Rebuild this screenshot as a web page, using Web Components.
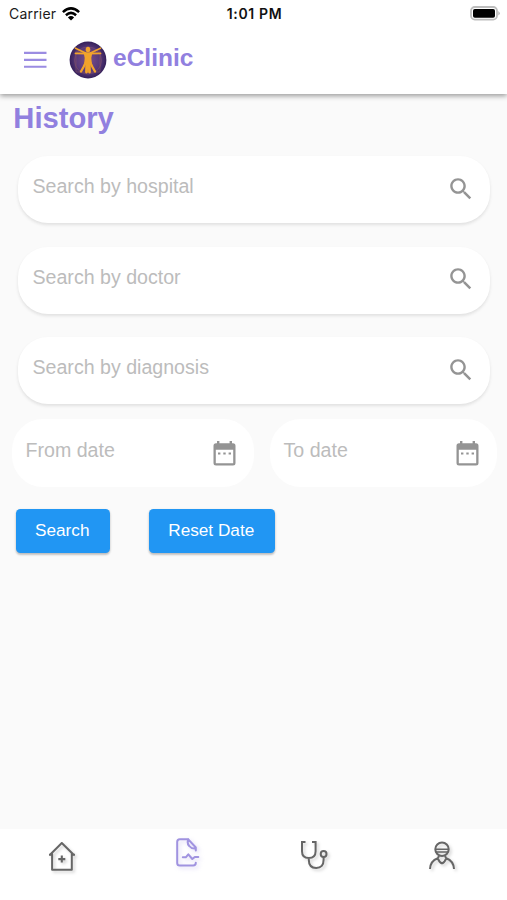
<!DOCTYPE html>
<html lang="en">
<head>
<meta charset="utf-8">
<title>eClinic</title>
<style>
html,body{margin:0;height:100%;background:#fafafa}
body{font-family:"Liberation Sans",Arial,sans-serif;overflow:hidden}
</style>
</head>
<body>
<clinic-app></clinic-app>
<script>
function define(name, html) {
  customElements.define(name, class extends HTMLElement {
    constructor() {
      super();
      const t = document.createElement('template');
      t.innerHTML = html;
      this.attachShadow({mode: 'open'}).appendChild(t.content.cloneNode(true));
    }
  });
}

define('status-bar', `<style>
:host{display:grid;grid-template-columns:1fr auto 1fr;align-items:center;height:27px;padding:0 7px 0 9px;box-sizing:border-box;font-family:Inter,"Liberation Sans",sans-serif;font-size:14px;color:#1b1b1b}
.l{display:flex;align-items:center;gap:6px;letter-spacing:.2px}
.t{font-weight:600;font-size:14px;letter-spacing:.62px;color:#111}
.r{display:flex;justify-content:flex-end}
svg{display:block}
</style>
<div class="l"><span>Carrier</span><svg width="18" height="14" viewBox="0 0 18 14" fill="none" stroke="#000" stroke-width="2.5"><path d="M.9 5.1Q9-2.3 17.1 5.1M3.9 8.2Q9 3.6 14.1 8.2"/><path d="M9 13.4 5.9 10.4Q9 7.8 12.1 10.4Z" fill="#000" stroke="none"/></svg></div>
<div class="t">1:01 PM</div>
<div class="r"><svg width="30" height="15" viewBox="0 0 30 15"><rect x="1" y="1" width="26" height="12.6" rx="3.8" fill="#fff" stroke="#bdbdbd" stroke-width="1.8"/><rect x="3" y="2.900" width="22" height="8.800" rx="1.8" fill="#000"/><path d="M28.3 5q3 2.300 0 4.600z" fill="#b5b5b5"/></svg></div>`);

define('clinic-logo', `<style>:host{display:block;width:38px;height:38px}svg{display:block}</style>
<svg width="38" height="38" viewBox="0 0 38 38"><defs><radialGradient id="g"><stop offset="0" stop-color="#79508a"/><stop offset=".65" stop-color="#58397a"/><stop offset="1" stop-color="#35205a"/></radialGradient></defs>
<circle cx="19" cy="19" r="18.4" fill="url(#g)"/><circle cx="19" cy="19.5" r="13.5" fill="none" stroke="#8c5966" stroke-width=".5"/><path d="M7 10h24v21H7z" fill="none" stroke="#8c5966" stroke-width=".5"/>
<g fill="none" stroke="#f2a32b" stroke-linecap="round"><path d="M17 12.2 6.5 7.2M21 12.2 31.5 7.2" stroke-width="1.6"/><path d="M6.5 12.4 17 12.5M31.5 12.4 21 12.5" stroke-width="1.8"/><path d="M17.8 21 17.5 31M20.2 21 20.5 31" stroke-width="2.800"/><path d="M17 21 14.5 26 12 30.5M21 21 23.5 26 26 30.5" stroke-width="2.300"/></g>
<path d="M14.600 11.4h8.800L22.3 17l.5 5.5h-7.600l.5-5.5z" fill="#f2a32b"/><ellipse cx="19" cy="8.6" rx="2.300" ry="2.800" fill="#f2a32b"/></svg>`);

define('app-header', `<style>
:host{display:flex;align-items:flex-start;height:67px;padding:14px 24px 0;box-sizing:border-box}
.m{display:block;margin-top:10px}
clinic-logo{margin-left:21.500px}
h1{margin:3px 0 0 6.500px;font-size:24.5px;line-height:28px;color:#9180df;font-weight:700}
</style>
<svg class="m" width="23" height="17" viewBox="0 0 23 17" stroke="#9b8ce2" stroke-width="2.100"><path d="M0 1.9h22.5M0 8.9h22.5M0 15.8h22.5"/></svg>
<clinic-logo></clinic-logo><h1>eClinic</h1>`);

define('search-field', `<style>
:host{display:flex;justify-content:space-between;align-items:flex-start;height:67px;box-sizing:border-box;padding:18px 17.500px 0 14.5px;border-radius:30px;background:#fff;box-shadow:0 2px 3px rgba(0,0,0,.075),0 2px 5px rgba(0,0,0,.03)}
span{font-size:19.6px;line-height:24px;color:#bcbcbc}
svg{display:block;margin-top:2.600px}
</style><span><slot></slot></span>
<svg width="24" height="24" viewBox="2 2 20 20" fill="#949494"><path d="M15.5 14h-.79l-.28-.27C15.41 12.59 16 11.11 16 9.5 16 5.91 13.09 3 9.5 3S3 5.91 3 9.5 5.91 16 9.5 16c1.61 0 3.09-.59 4.23-1.57l.27.28v.79l5 4.99L20.49 19l-4.99-5zm-6 0C7.01 14 5 11.99 5 9.5S7.01 5 9.5 5 14 7.01 14 9.5 11.99 14 9.5 14z"/></svg>`);

define('date-field', `<style>
:host{display:flex;justify-content:space-between;align-items:flex-start;height:68px;box-sizing:border-box;padding:19px 18px 0 13.5px;border-radius:31px;background:#fff}
span{font-size:19.6px;line-height:24px;color:#bcbcbc}
svg{display:block;margin-top:2.500px}
</style><span><slot></slot></span>
<svg width="23" height="25" viewBox="0 0 23 25"><path fill="#949494" fill-rule="evenodd" d="M3 2.2h1V0h2.4v2.2h10.2V0H19v2.2h1q2.5 0 2.5 2.5v17.400q0 2.5-2.5 2.5H3Q.5 24.600.5 22.100V4.700Q.5 2.200 3 2.200ZM2.800 8.700v13.600h17.400V8.700Z"/><path fill="#949494" d="M5 11.400h2.400v2.200H5zM10.300 11.400h2.400v2.200h-2.400zM15.600 11.400H18v2.200h-2.400z"/></svg>`);

define('action-button', `<style>
:host{display:flex;align-items:center;justify-content:center;height:44px;box-sizing:border-box;padding:0 1px 1px 0;border-radius:4.5px;background:#2196f3;color:#fff;font-size:17.2px;box-shadow:0 2px 2px rgba(0,0,0,.16),0 1px 3px rgba(0,0,0,.14)}
</style><span><slot></slot></span>`);

define('bottom-nav', `<style>
:host{display:grid;grid-template-columns:repeat(4,1fr);height:71px;background:#fff;justify-items:center}
svg{display:block;fill:none;stroke:#666;stroke-width:2;filter:drop-shadow(2px 2px 1.5px rgba(0,0,0,.17))}
.h{margin:12px 0 0 -3px}.d{margin:8px 0 0 -5px;stroke:#a093e0;filter:drop-shadow(2px 2px 2px rgba(145,128,223,.3))}.s{margin:10px 0 0 -6px}.p{margin:11px 0 0 -3px}
</style>
<svg class="h" width="30" height="32" viewBox="0 0 30 32"><path d="M2.500 14.200 14.800 2 27.200 14.200M5.100 12.500V28.800H24.800V12.500M2 13.800H5.500M24.500 13.800H28" stroke-linejoin="round"/><path d="M14.800 14.600v7M11.300 18.100h7" stroke-width="2.100"/></svg>
<svg class="d" width="28" height="32" viewBox="0 0 28 32" stroke-linecap="round" stroke-linejoin="round"><path d="M14.300 2.300H5.800Q3.200 2.300 3.200 5V26Q3.200 28.600 5.800 28.600H19.200Q21.800 28.600 21.800 25.800M14.300 2.300 21.800 10.500V13.500M14.200 2.500Q12.800 6.200 15.200 9 17.600 12 21.700 11.500"/><path d="M8.800 20.300H11.800L14.300 17.300 18.300 22 20.800 19.900H24.300"/></svg>
<svg class="s" width="30" height="34" viewBox="0 0 30 34"><path d="M6.500 2.900H3V12.300Q3 19.100 9.800 19.100T16.600 12.300V2.900H13M9.800 19.100V20.800Q9.800 29 17.200 29T24.600 20.800V18"/><circle cx="24.600" cy="15" r="2.900"/></svg>
<svg class="p" width="30" height="32" viewBox="0 0 30 32"><circle cx="15" cy="9.300" r="6.700"/><path d="M8.200 9.200H21.800M8.600 12H21.400" stroke-width="1.400"/><path d="M3 29Q3.300 21 10.800 18.200L12 16M27 29Q26.700 21 19.200 18.200L18 16M10.800 18.300Q12.500 22.500 15 23.400 17.500 22.500 19.200 18.300"/></svg>`);

define('clinic-app', `<style>
:host{display:flex;flex-direction:column;width:507px;height:900px;background:#fafafa}
header{height:94px;background:#fff;box-shadow:0 2px 5px rgba(0,0,0,.38);position:relative}
main{flex:1;display:flex;flex-direction:column}
h2{margin:7px 0 0 13.300px;font-size:29.200px;line-height:34px;color:#9180df;font-weight:700}
.fields{display:grid;gap:23.500px;padding:21px 17px 0 18px}
.dates{display:grid;grid-template-columns:242px 227px;gap:16px;padding:15px 0 0 12px}
.actions{display:grid;grid-template-columns:94.500px 126.500px;gap:38.500px;padding:22px 0 0 15.500px}
</style>
<header><status-bar></status-bar><app-header></app-header></header>
<main><h2>History</h2>
<div class="fields"><search-field>Search by hospital</search-field><search-field>Search by doctor</search-field><search-field>Search by diagnosis</search-field></div>
<div class="dates"><date-field>From date</date-field><date-field>To date</date-field></div>
<div class="actions"><action-button>Search</action-button><action-button>Reset Date</action-button></div>
</main><bottom-nav></bottom-nav>`);
</script>
</body>
</html>
